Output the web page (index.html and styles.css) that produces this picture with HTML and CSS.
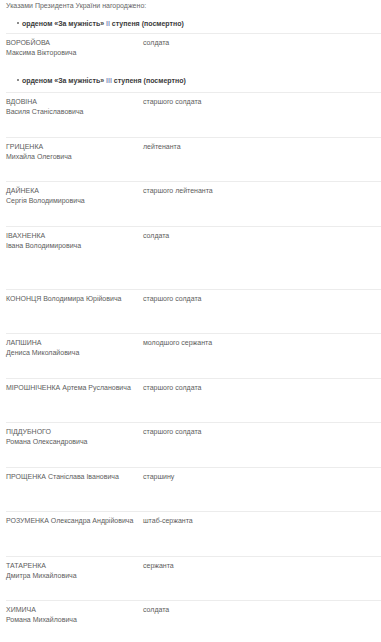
FILE: index.html
```html
<!DOCTYPE html>
<html lang="uk">
<head>
<meta charset="utf-8">
<link rel="stylesheet" href="styles.css">
</head>
<body>
<div class="page">
  <p class="intro">Указами Президента України нагороджено:</p>

  <ul class="order"><li>орденом «За мужність» <span class="num">II</span> ступеня (посмертно)</li></ul>
  <div class="list">
    <div class="row"><div class="name">ВОРОБЙОВА<br>Максима Вікторовича</div><div class="rank">солдата</div></div>
  </div>

  <ul class="order order2"><li>орденом «За мужність» <span class="num">III</span> ступеня (посмертно)</li></ul>
  <div class="list list2">
    <div class="row"><div class="name">ВДОВІНА<br>Василя Станіславовича</div><div class="rank">старшого солдата</div></div>
    <div class="row"><div class="name">ГРИЦЕНКА<br>Михайла Олеговича</div><div class="rank">лейтенанта</div></div>
    <div class="row"><div class="name">ДАЙНЕКА<br>Сергія Володимировича</div><div class="rank">старшого лейтенанта</div></div>
    <div class="row tall"><div class="name">ІВАХНЕНКА<br>Івана Володимировича</div><div class="rank">солдата</div></div>
    <div class="row"><div class="name">КОНОНЦЯ Володимира Юрійовича</div><div class="rank">старшого солдата</div></div>
    <div class="row"><div class="name">ЛАПШИНА<br>Дениса Миколайовича</div><div class="rank">молодшого сержанта</div></div>
    <div class="row"><div class="name">МІРОШНІЧЕНКА Артема Руслановича</div><div class="rank">старшого солдата</div></div>
    <div class="row"><div class="name">ПІДДУБНОГО<br>Романа Олександровича</div><div class="rank">старшого солдата</div></div>
    <div class="row"><div class="name">ПРОЩЕНКА Станіслава Івановича</div><div class="rank">старшину</div></div>
    <div class="row"><div class="name">РОЗУМЕНКА Олександра Андрійовича</div><div class="rank">штаб-сержанта</div></div>
    <div class="row"><div class="name">ТАТАРЕНКА<br>Дмитра Михайловича</div><div class="rank">сержанта</div></div>
    <div class="row"><div class="name">ХИМИЧА<br>Романа Михайловича</div><div class="rank">солдата</div></div>
  </div>
</div>
</body>
</html>
```
FILE: styles.css
```css
html, body {
  margin: 0;
  padding: 0;
  background: #ffffff;
}
body {
  font-family: "Liberation Sans", Arial, sans-serif;
  font-size: 7px;
  line-height: 10px;
  color: #5c5c5c;
}
.page {
  padding: 0 0 0 6px;
}
.intro {
  margin: 0;
  padding-top: 1px;
  color: #666666;
}
.order {
  margin: 8px 0 0 0;
  padding: 0 0 0 11px;
  list-style: none;
  font-weight: bold;
  color: #3a3a3a;
}
.order li {
  line-height: 10px;
}
.order li::before {
  content: "";
  display: inline-block;
  width: 2px;
  height: 2px;
  border-radius: 50%;
  background: #666666;
  margin-right: 3px;
  vertical-align: 2px;
}
.num {
  color: #8797bd;
}
.order2 {
  margin-top: -1.5px;
}
.list {
  margin-top: 4px;
}
.list2 {
  margin-top: 6px;
}
.row {
  display: grid;
  grid-template-columns: 137px 1fr;
  border-top: 1px solid #ececec;
  padding-top: 4px;
  height: 44.5px;
  box-sizing: border-box;
}
.row.tall {
  height: 63px;
}
.name, .rank {
  color: #5c5c5c;
}
```
